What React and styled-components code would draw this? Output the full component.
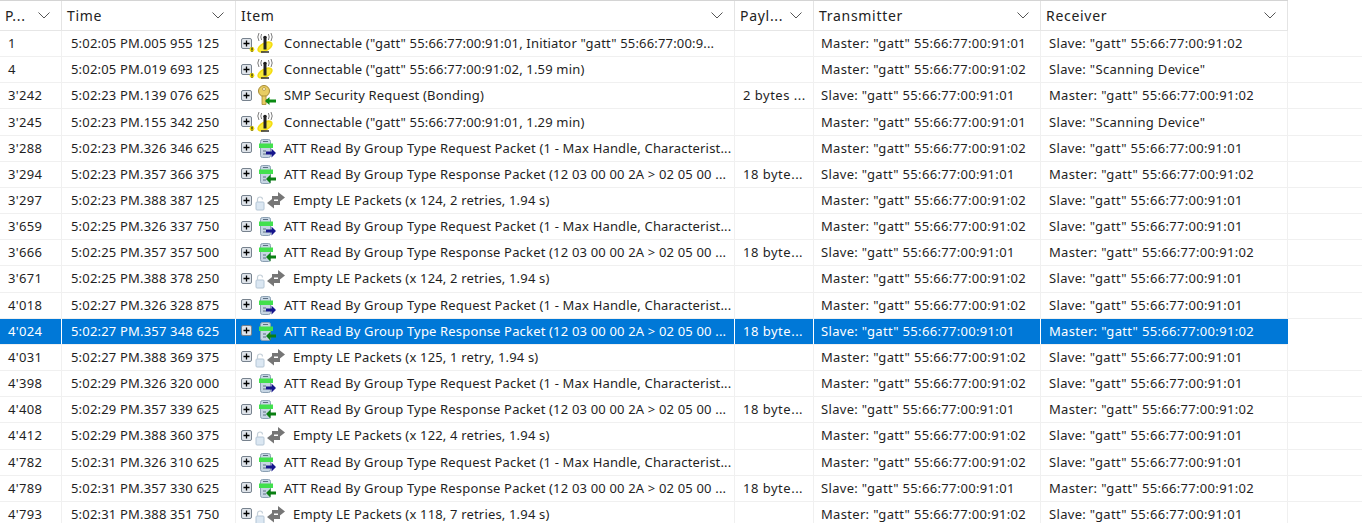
import React from "react"
import styled, { createGlobalStyle } from "styled-components"

const GlobalStyle = createGlobalStyle`
  html, body {
    margin: 0;
    padding: 0;
    background: #fff;
    overflow: hidden;
  }
`

const COLUMNS = "62px 174px 499px 79px 227px 247px"

const Page = styled.div`
  width: 1362px;
  height: 523px;
  overflow: hidden;
  background: #fff;
  font-family: "Noto Sans", "Open Sans", sans-serif;
  font-size: 13px;
  color: #1f1f1f;
`

const Header = styled.div`
  display: grid;
  grid-template-columns: ${COLUMNS};
  width: 1288px;
  height: 29px;
  border-top: 1px solid #d4d4d4;
  border-bottom: 1px solid #e6e6e6;
`

const HeaderCell = styled.div`
  display: flex;
  align-items: center;
  justify-content: space-between;
  padding: 0 11px 0 5px;
  border-right: 1px solid #e4e4e4;
  font-size: 14px;
  letter-spacing: 0.7px;
  color: #222;
  white-space: nowrap;
`

const Row = styled.div`
  display: grid;
  grid-template-columns: ${COLUMNS};
  width: ${(p) => (p.$selected ? "1288px" : "1362px")};
  height: 26.17px;
  box-sizing: border-box;
  border-bottom: 1px solid #f0f0f0;
  background: ${(p) => (p.$selected ? "#0078d7" : "#fff")};
  color: ${(p) => (p.$selected ? "#fff" : "#1f1f1f")};
`

const Cell = styled.div`
  display: flex;
  align-items: center;
  padding-left: ${(p) => p.$pad}px;
  padding-bottom: 1px;
  border-right: 1px solid ${(p) => (p.$selected ? "#fff" : "#f0f0f0")};
  white-space: nowrap;
  overflow: hidden;
  letter-spacing: ${(p) => p.$spacing || 0}px;
  &:last-child {
    border-right-color: ${(p) => (p.$selected ? "#0078d7" : "#f0f0f0")};
  }
`

const Expander = styled.svg`
  flex: none;
  width: 11px;
  height: 11px;
  margin-right: 3px;
`

const ItemIcon = styled.svg`
  flex: none;
  width: ${(p) => p.$w}px;
  height: 22px;
  margin-left: ${(p) => p.$shift || 0}px;
  margin-right: ${(p) => p.$gap}px;
  overflow: visible;
`

const PlusBox = () => (
  <Expander viewBox="0 0 11 11">
    <rect x="0.5" y="0.5" width="10" height="10" rx="1.5" fill="#dfe4ea" stroke="#77828e" />
    <path d="M2.5 5.5h6M5.5 2.5v6" stroke="#000" strokeWidth="1.3" />
  </Expander>
)

// antenna on a yellow ring, warning mark sits on the expander corner
const BeaconIcon = () => (
  <ItemIcon viewBox="0 0 31 22" $w={31} $gap={9} $shift={-11}>
    <circle cx="8" cy="17.5" r="2.4" fill="#f5e000" />
    <rect x="7.4" y="15.5" width="1.2" height="2.6" fill="#222" />
    <rect x="7.4" y="18.6" width="1.2" height="1.1" fill="#222" />
    <ellipse cx="21" cy="15" rx="7.6" ry="3.8" fill="#f8ea3a" stroke="#f4dc10" strokeWidth="1.6" transform="rotate(-28 21 15)" />
    <path d="M21 6.500v11" stroke="#222" strokeWidth="3" />
    <path d="M17 20h8" stroke="#3a3a3a" strokeWidth="1.6" />
    <circle cx="21" cy="5.500" r="1.800" fill="#1c1c1c" />
    <path d="M17.600 2q-1.600 3 0 6M24.400 2q1.600 3 0 6M15 1q-2.400 4 0 8M27 1q2.400 4 0 8" fill="none" stroke="#7d7d7d" strokeWidth="1" />
  </ItemIcon>
)

const KeyIcon = () => (
  <ItemIcon viewBox="0 0 20 22" $w={20} $gap={9}>
    <circle cx="9" cy="7" r="5.500" fill="#e8cd62" stroke="#a78a33" />
    <circle cx="9" cy="5" r="1.500" fill="#fff9d8" stroke="#a78a33" strokeWidth="0.7" />
    <path d="M7 12h4v8.500H7z" fill="#e8cd62" stroke="#a78a33" strokeWidth="0.8" />
    <path d="M11 15.500h1.500M11 18h1.500" stroke="#a78a33" />
    <path d="M10 17l4.500-4v2.500H21v3h-6.500V21z" fill="#0a8a12" />
  </ItemIcon>
)

const PacketIcon = ({ request }) => (
  <ItemIcon viewBox="0 0 20 22" $w={20} $gap={9}>
    <rect x="5.500" y="2.500" width="10" height="18" rx="2" fill="#c6d5e3" stroke="#8ba0b3" />
    <path d="M8 4.500h5M8 14h3M8 17h3" stroke="#5d7082" />
    <rect x="4" y="6.500" width="14" height="4.500" fill="#42e04e" />
    {request ? (
      <path d="M11 14.500h5.500v-3l4.500 4.500-4.500 4.500v-3H11z" fill="#16168c" />
    ) : (
      <path d="M21 14.500h-5.500v-3L11 16l4.500 4.500v-3H21z" fill="#0a8012" />
    )}
  </ItemIcon>
)

const EmptyIcon = () => (
  <ItemIcon viewBox="0 0 30 22" $w={30} $gap={8}>
    <rect x="1" y="13" width="8" height="8" rx="1" fill="#dbe7f2" stroke="#b4c6d6" />
    <path d="M2.500 13v-2.500a2.500 2.500 0 0 1 5 0" fill="none" stroke="#c4cfd8" strokeWidth="1.2" />
    <path d="M17 7h6V3l7 5.500-7 5.500v-3.500h-6z" fill="#767676" />
    <path d="M25 12h-6V8.500l-7 5.500 7 5.500V16h6z" fill="#767676" />
  </ItemIcon>
)

const HeaderChevron = styled.svg`
  flex: none;
  width: 12px;
  height: 7px;
`

const Chevron = () => (
  <HeaderChevron viewBox="0 0 12 7">
    <path d="M0.500 0.500L6 6l5.500-5.500" fill="none" stroke="#555" />
  </HeaderChevron>
)

const HEADERS = ["P...", "Time", "Item", "Payl...", "Transmitter", "Receiver"]

const M1 = 'Master: "gatt" 55:66:77:00:91:01'
const M2 = 'Master: "gatt" 55:66:77:00:91:02'
const S1 = 'Slave: "gatt" 55:66:77:00:91:01'
const S2 = 'Slave: "gatt" 55:66:77:00:91:02'
const SCAN = 'Slave: "Scanning Device"'

const REQ = "ATT Read By Group Type Request Packet (1 - Max Handle, Characterist..."
const RES = "ATT Read By Group Type Response Packet (12 03 00 00 2A > 02 05 00 ..."

const ROWS = [
  ["1", "5:02:05 PM.005 955 125", "beacon", 'Connectable ("gatt" 55:66:77:00:91:01, Initiator "gatt" 55:66:77:00:9...', "", M1, S2],
  ["4", "5:02:05 PM.019 693 125", "beacon", 'Connectable ("gatt" 55:66:77:00:91:02, 1.59 min)', "", M2, SCAN],
  ["3'242", "5:02:23 PM.139 076 625", "key", "SMP Security Request (Bonding)", "2 bytes ...", S1, M2],
  ["3'245", "5:02:23 PM.155 342 250", "beacon", 'Connectable ("gatt" 55:66:77:00:91:01, 1.29 min)', "", M1, SCAN],
  ["3'288", "5:02:23 PM.326 346 625", "req", REQ, "", M2, S1],
  ["3'294", "5:02:23 PM.357 366 375", "res", RES, "18 byte...", S1, M2],
  ["3'297", "5:02:23 PM.388 387 125", "empty", "Empty LE Packets (x 124, 2 retries, 1.94 s)", "", M2, S1],
  ["3'659", "5:02:25 PM.326 337 750", "req", REQ, "", M2, S1],
  ["3'666", "5:02:25 PM.357 357 500", "res", RES, "18 byte...", S1, M2],
  ["3'671", "5:02:25 PM.388 378 250", "empty", "Empty LE Packets (x 124, 2 retries, 1.94 s)", "", M2, S1],
  ["4'018", "5:02:27 PM.326 328 875", "req", REQ, "", M2, S1],
  ["4'024", "5:02:27 PM.357 348 625", "res", RES, "18 byte...", S1, M2],
  ["4'031", "5:02:27 PM.388 369 375", "empty", "Empty LE Packets (x 125, 1 retry, 1.94 s)", "", M2, S1],
  ["4'398", "5:02:29 PM.326 320 000", "req", REQ, "", M2, S1],
  ["4'408", "5:02:29 PM.357 339 625", "res", RES, "18 byte...", S1, M2],
  ["4'412", "5:02:29 PM.388 360 375", "empty", "Empty LE Packets (x 122, 4 retries, 1.94 s)", "", M2, S1],
  ["4'782", "5:02:31 PM.326 310 625", "req", REQ, "", M2, S1],
  ["4'789", "5:02:31 PM.357 330 625", "res", RES, "18 byte...", S1, M2],
  ["4'793", "5:02:31 PM.388 351 750", "empty", "Empty LE Packets (x 118, 7 retries, 1.94 s)", "", M2, S1],
]

const SELECTED = "4'024"

const iconFor = (kind) => {
  if (kind === "beacon") return <BeaconIcon />
  if (kind === "key") return <KeyIcon />
  if (kind === "req") return <PacketIcon request />
  if (kind === "res") return <PacketIcon />
  return <EmptyIcon />
}

const App = () => {
  return (
    <Page>
      <GlobalStyle />
      <Header>
        {HEADERS.map((h) => (
          <HeaderCell key={h}>
            {h}
            <Chevron />
          </HeaderCell>
        ))}
      </Header>
      {ROWS.map(([id, time, kind, item, payload, tx, rx]) => {
        const selected = id === SELECTED
        return (
          <Row key={id} $selected={selected}>
            <Cell $pad={8} $spacing={0.3} $selected={selected}>{id}</Cell>
            <Cell $pad={9} $spacing={0.18} $selected={selected}>{time}</Cell>
            <Cell $pad={5} $spacing={0.17} $selected={selected}>
              <PlusBox />
              {iconFor(kind)}
              {item}
            </Cell>
            <Cell $pad={8} $spacing={0.5} $selected={selected}>{payload}</Cell>
            <Cell $pad={7} $spacing={0.32} $selected={selected}>{tx}</Cell>
            <Cell $pad={8} $spacing={0.32} $selected={selected}>{rx}</Cell>
          </Row>
        )
      })}
    </Page>
  )
}

export default App
